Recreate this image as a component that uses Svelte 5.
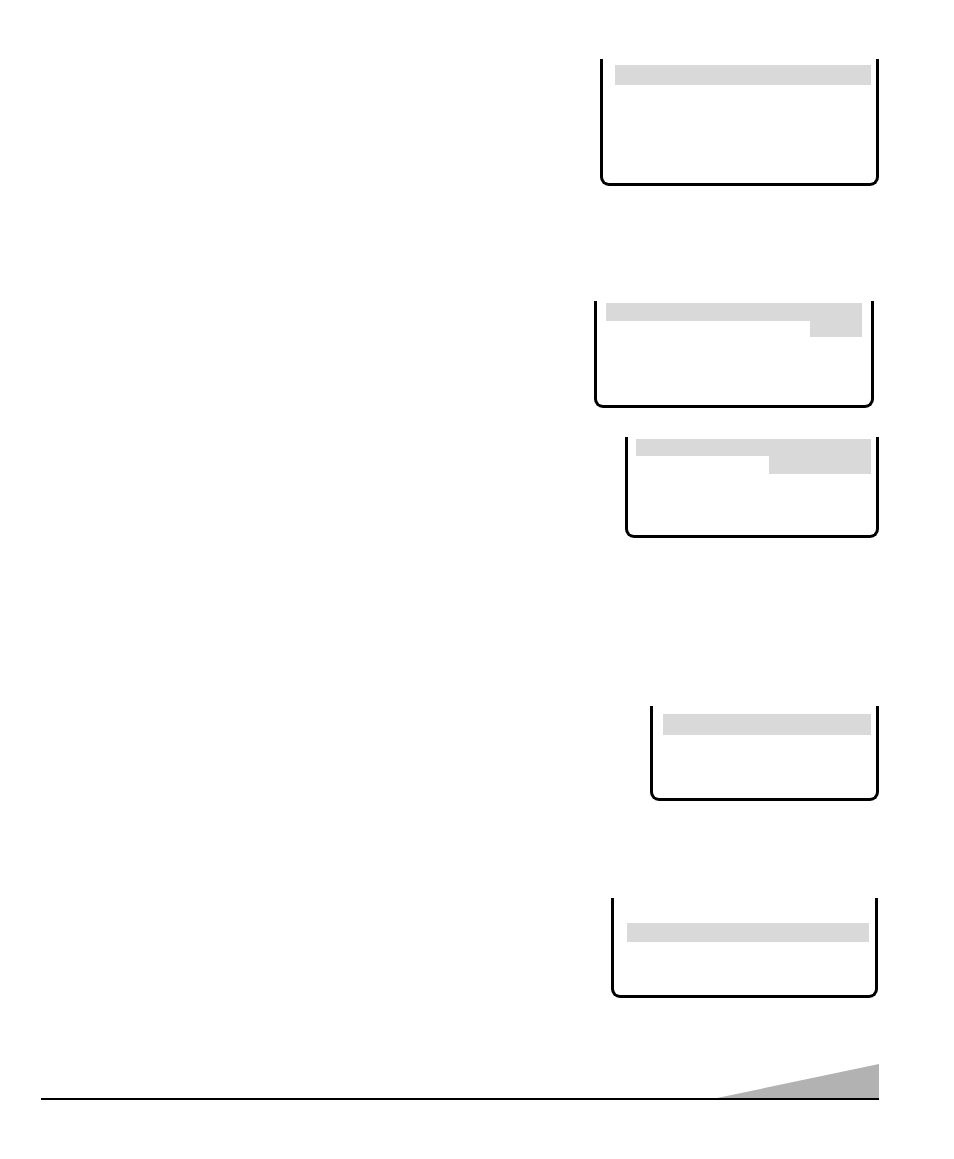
<script lang="ts">
  type Bar = { left: number; height: number };
  type Screen = { id: string; gap: number; width: number; height: number; outset: number; top: number; right: number; bars: Bar[] };

  // left is measured from the inner edge of the frame
  const screens: Screen[] = [
    { id: 'first', gap: 0, width: 279, height: 127, outset: 0, top: 6, right: 5, bars: [{ left: 12, height: 20 }] },
    { id: 'second', gap: 115, width: 280, height: 107, outset: 5, top: 2, right: 9, bars: [{ left: 9, height: 18 }, { left: 213, height: 16 }] },
    { id: 'third', gap: 29, width: 254, height: 101, outset: 0, top: 2, right: 5, bars: [{ left: 8, height: 17 }, { left: 141, height: 18 }] },
    { id: 'fourth', gap: 168, width: 229, height: 95, outset: 0, top: 8, right: 5, bars: [{ left: 10, height: 21 }] },
    { id: 'fifth', gap: 97, width: 267, height: 100, outset: 1, top: 25, right: 6, bars: [{ left: 13, height: 19 }] },
  ];
</script>

<main class="page">
  {#each screens as s (s.id)}
    <section
      class="screen"
      style="width: {s.width}px; min-height: {s.height}px; margin-top: {s.gap}px; margin-right: {s.outset}px; padding-top: {s.top}px; padding-right: {s.right}px"
    >
      {#each s.bars as bar}
        <div class="bar" style="height: {bar.height}px; margin-left: {bar.left}px"></div>
      {/each}
    </section>
  {/each}

  <footer class="foot">
    <svg class="wedge" viewBox="0 0 162 34" aria-hidden="true">
      <path d="M0 34 L162 0 V34 Z" />
    </svg>
  </footer>
</main>

<style>
  :global(body) { margin: 0; background: #fff; font-family: "Liberation Sans", sans-serif; }
  .page { display: flex; flex-direction: column; align-items: flex-end; padding: 59px 75px 59px 41px; }
  .screen { box-sizing: border-box; max-width: 100%; border: 3px solid #000; border-top: 0; border-radius: 0 0 9px 9px; }
  .bar { background: #d9d9d9; }
  .foot { display: flex; justify-content: flex-end; align-self: stretch; margin-top: 66px; border-bottom: 2px solid #000; }
  .wedge { display: block; width: 162px; height: 34px; fill: #b2b2b2; }
</style>
